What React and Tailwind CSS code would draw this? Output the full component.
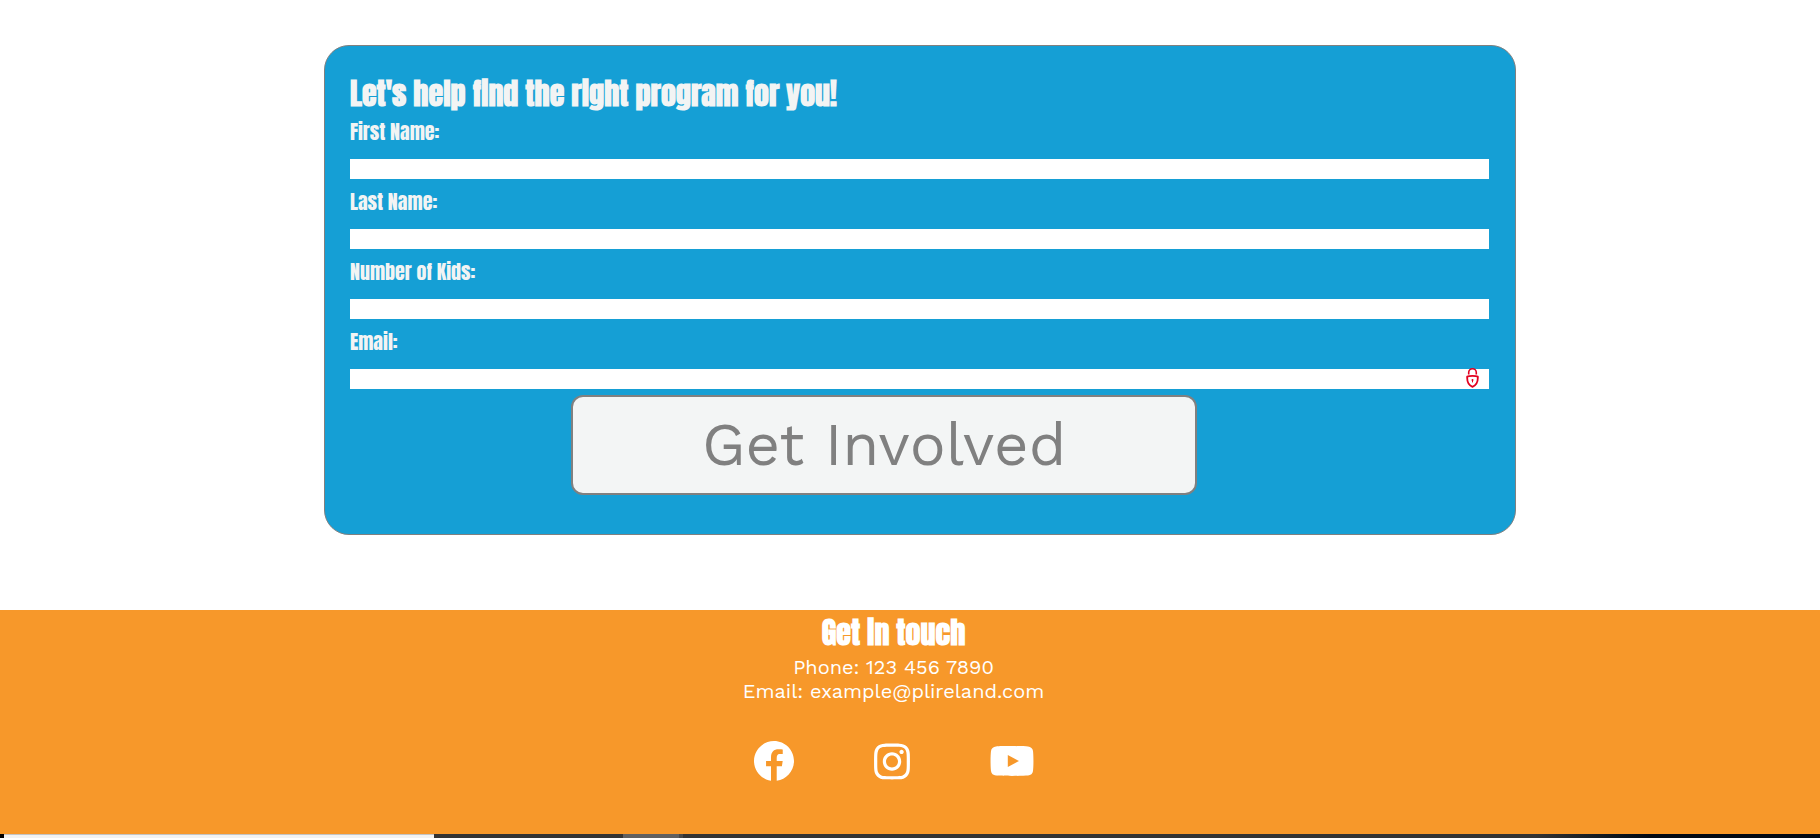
import { FaInstagram } from "react-icons/fa";

const fields = [
  { id: "first-name", label: "First Name:", type: "text" },
  { id: "last-name", label: "Last Name:", type: "text" },
  { id: "kids", label: "Number of Kids:", type: "text" },
  { id: "email", label: "Email:", type: "email" },
];

function LockIcon() {
  return (
    <svg
      className="pointer-events-none absolute right-2.5 bottom-px h-5 w-[13px]"
      viewBox="0 0 13 20"
      fill="none"
      stroke="#e3001f"
      aria-hidden="true"
    >
      <path d="M2.7 6.6V4.6a3.8 3.8 0 0 1 7.6 0v2" strokeWidth="1.6" />
      <path
        d="M1.2 8.6c1.8-.9 8.8-.9 10.6 0 .3 4.8-1.3 8.6-5.3 10.2C2.5 17.2.9 13.4 1.2 8.6z"
        strokeWidth="1.8"
        strokeLinejoin="round"
      />
      <circle cx="6.5" cy="12" r="1" fill="#e3001f" stroke="none" />
      <path d="M6.5 12v2.4" strokeWidth="1" />
    </svg>
  );
}

function FacebookIcon() {
  return (
    <svg className="size-10" viewBox="2 2 20 20" fill="currentColor" aria-hidden="true">
      <path d="M12 2C6.477 2 2 6.477 2 12c0 5.013 3.693 9.153 8.505 9.876V14.65H8.031v-2.629h2.474v-1.749c0-2.896 1.411-4.167 3.818-4.167 1.153 0 1.762.085 2.051.124v2.294h-1.642c-1.022 0-1.379.969-1.379 2.061v1.437h2.995l-.406 2.629h-2.588v7.247C18.235 21.236 22 17.062 22 12c0-5.523-4.477-10-10-10z" />
    </svg>
  );
}

function YoutubeIcon() {
  return (
    <svg className="h-10 w-11" viewBox="0 0 44 40" fill="currentColor" aria-hidden="true">
      <path
        fillRule="evenodd"
        d="M6 5.4C11 5 33 5 38 5.400c2.800.3 4.700 2 5 4.600.6 5 .6 15 0 20-.3 2.600-2.200 4.300-5 4.600-5 .4-27 .4-32 0-2.800-.3-4.700-2-5-4.600-.6-5-.6-15 0-20 .3-2.600 2.200-4.300 5-4.600zM17.800 14v12L29 20z"
      />
    </svg>
  );
}

function Field({ id, label, type }) {
  return (
    <div className="flex flex-col gap-3">
      <label
        htmlFor={id}
        className="self-start font-['Anton','Roboto_Condensed',sans-serif] text-xl leading-[30px]"
      >
        {label}
      </label>
      <div className="relative flex">
        <input
          id={id}
          name={id}
          type={type}
          className="h-5 w-full bg-white px-1 text-sm text-black outline-none"
        />
        {type === "email" && <LockIcon />}
      </div>
    </div>
  );
}

function ProgramForm() {
  return (
    <form
      onSubmit={(e) => e.preventDefault()}
      className="ml-[17.8%] w-[65.5%] rounded-[25px] border border-[#808080] bg-[#159fd5] pt-[25px] pr-[26px] pb-[39px] pl-[25px] text-[#f2f4f4]"
    >
      <h2 className="pb-px font-['Anton','Roboto_Condensed',sans-serif] text-[30px] leading-[45px] font-bold">
        Let's help find the right program for you!
      </h2>
      <div className="flex flex-col gap-2">
        {fields.map((field) => (
          <Field key={field.id} {...field} />
        ))}
      </div>
      <button
        type="submit"
        className="mt-1.5 ml-[19.4%] h-[100px] w-[55%] rounded-xl border-2 border-[#808080] bg-[#f3f5f5] text-[60px] leading-none text-[#808080]"
      >
        Get Involved
      </button>
    </form>
  );
}

function Footer() {
  return (
    <footer className="flex flex-col items-center bg-[#f7982a] pr-[33px] pb-[52px] text-white">
      <h2 className="font-['Anton','Roboto_Condensed',sans-serif] text-[30px] leading-[45px] font-bold">
        Get in touch
      </h2>
      <p className="text-xl leading-6">Phone: 123 456 7890</p>
      <p className="text-xl leading-6">Email: example@plireland.com</p>
      <nav className="mt-[38px] flex items-start gap-20">
        <a href="#facebook" aria-label="Facebook">
          <FacebookIcon />
        </a>
        <a href="#instagram" aria-label="Instagram">
          <FaInstagram className="h-[41px] w-9" />
        </a>
        <a href="#youtube" aria-label="YouTube">
          <YoutubeIcon />
        </a>
      </nav>
    </footer>
  );
}

function BottomStrip() {
  return (
    <div className="flex h-1 bg-[#333333]">
      <div className="w-1 bg-black" />
      <div className="w-[23.6%] border-t border-[#c4c4c4] bg-[#f2f2f2]" />
      <div className="w-[10.4%]" />
      <div className="w-[3.1%] bg-[#606060]" />
      <div className="w-1 bg-[#484848]" />
      <div className="grow bg-linear-to-r from-[#333333] from-75% to-[#010914] to-85%" />
    </div>
  );
}

export default function App() {
  return (
    <div className="bg-white font-['Work_Sans','Inter',sans-serif]">
      <main className="pt-[45px] pb-[75px]">
        <ProgramForm />
      </main>
      <Footer />
      <BottomStrip />
    </div>
  );
}
